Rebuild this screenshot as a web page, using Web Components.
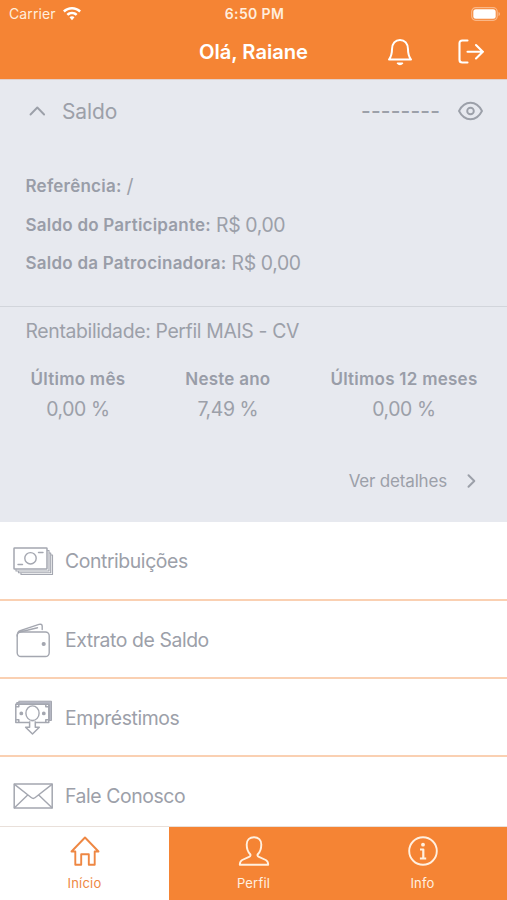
<!DOCTYPE html>
<html lang="pt-BR">
<head>
<meta charset="utf-8">
<title>Início</title>
<style>
html,body{margin:0;height:900px;overflow:hidden;background:#fff}
body{font-family:Inter,"Liberation Sans",sans-serif;color:#9ca0a9}
</style>
</head>
<body>
<mobile-app></mobile-app>
<script>
const define = (name, css, html) => customElements.define(name, class extends HTMLElement {
  constructor() {
    super();
    const t = document.createElement('template');
    t.innerHTML = `<style>*{box-sizing:border-box}:host{box-sizing:border-box}svg{display:block;flex:none;fill:none;stroke:currentColor;overflow:visible}${css}</style>${typeof html === 'function' ? html(this) : html}`;
    this.attachShadow({mode: 'open'}).append(t.content.cloneNode(true));
  }
});

define('status-bar', `
:host{display:grid;grid-template-columns:1fr auto 1fr;align-items:center;height:27px;padding:0 7px 0 9px;color:#ffeedd;font-size:14px}
.l{display:flex;align-items:center;gap:7px}.c{letter-spacing:.1px}
.t{font-weight:600;font-size:14px;letter-spacing:.35px}
.r{justify-self:end}`,
`<div class="l"><span class="c">Carrier</span>
<svg width="18" height="14" viewBox="0 0 18 14" style="fill:#fff;stroke:none"><path d="M9 0C5.600 0 2.500 1.300 0 3.600l1.700 1.900C3.700 3.700 6.200 2.600 9 2.600s5.300 1.100 7.300 2.900L18 3.600C15.500 1.300 12.400 0 9 0zM9 4.700c-2.100 0-4 .8-5.500 2.200l1.700 1.900C6.200 7.800 7.500 7.200 9 7.200s2.800.6 3.800 1.600l1.700-1.900C13 5.500 11.100 4.700 9 4.700zM9 9.200c-1 0-1.800.4-2.500 1L9 13.300l2.500-3.100c-.7-.6-1.500-1-2.500-1z"/></svg></div>
<span class="t">6:50 PM</span>
<svg class="r" width="29" height="14" viewBox="0 0 29 14"><rect x=".7" y=".7" width="25.500" height="12.600" rx="4" stroke="#fab787" stroke-width="1.200"/><rect x="2.300" y="2.200" width="22.400" height="9.600" rx="2.500" fill="#fff" stroke="none"/><path d="M27.500 5v4c.9-.3 1.500-1 1.500-2s-.6-1.700-1.500-2z" fill="#fab787" stroke="none"/></svg>`);

define('app-header', `
:host{display:block;height:79px;background:#f58434;color:#fff}
.bar{display:grid;grid-template-columns:1fr auto 1fr;align-items:center;height:49px}
h1{grid-column:2;margin:0;font-size:20.200px;font-weight:600;letter-spacing:-.05px;white-space:nowrap}
.a{display:flex;justify-content:flex-end;align-items:center;gap:45px;padding:1px 23px 0 0}`,
`<status-bar></status-bar>
<div class="bar"><h1><slot></slot></h1><div class="a">
<svg width="26" height="28" viewBox="0 0 26 28" stroke-width="2" stroke-linejoin="round" stroke-linecap="round"><path d="M2 21.500c2.300-3 3-5.400 3-10.200C5 5.500 8.400 1.900 13 1.900s8 3.600 8 9.400c0 4.800.7 7.200 3 10.200z"/><path d="M10.500 25.200c1.400 1.600 3.600 1.600 5 0z" fill="currentColor" stroke-width="1.500"/></svg>
<svg width="26" height="26" viewBox="0 0 26 26" stroke-width="2.100" stroke-linecap="round" stroke-linejoin="round"><path d="M9.500 1.500H4.300Q1.500 1.500 1.500 4.300v16.400q0 2.800 2.800 2.800h5.200M9.500 12.700H25M18 6l6.800 6.700L18 19.400"/></svg>
</div></div>`);

define('balance-line', `
:host{display:flex;align-items:center;gap:5px;height:38.400px;font-size:19.400px;white-space:nowrap;letter-spacing:-.35px}
b{font-size:17px;font-weight:600;color:#999da8;letter-spacing:.23px}`,
el => `<b>${el.getAttribute('label')}</b><span><slot></slot></span>`);

define('return-rate', `
:host{display:block;text-align:center;white-space:nowrap}
b{display:block;font-size:17px;line-height:24px;font-weight:600;color:#999da8;letter-spacing:.25px}
span{display:block;font-size:19.400px;line-height:24px;margin-top:6px;letter-spacing:-.4px}`,
el => `<b>${el.getAttribute('label')}</b><span><slot></slot></span>`);

define('balance-panel', `
:host{display:block;height:443.400px;background:#e7e9ef;border-top:1px solid #e3cfc9}
.h{display:flex;align-items:center;height:62px;padding:0 24px 0 29px}
.s{font-size:21px;margin-left:17px;letter-spacing:-.1px}
.d{margin-left:auto;margin-right:18px;margin-top:-2px;font-size:21px;font-weight:500;letter-spacing:.15px;white-space:nowrap}
.lines{height:165px;padding:25px 25.500px 0;border-bottom:1px solid #d2d5db}
.p{padding:12px 25.500px 0;font-size:19.400px;line-height:24px;letter-spacing:-.35px}
.rates{display:flex;justify-content:space-between;padding:24px 29.500px 0 30.500px}
.v{display:flex;justify-content:flex-end;align-items:center;gap:20px;height:24px;margin-top:48px;padding-right:31px;font-size:17px;letter-spacing:-.18px}`,
`<div class="h"><svg width="16" height="10" viewBox="0 0 16 10" stroke-width="1.900" stroke-linecap="round" stroke-linejoin="round"><path d="M1.500 8.500 8.300 1.500l6.800 7"/></svg><span class="s">Saldo</span><span class="d">--------</span>
<svg width="25" height="18" viewBox="0 0 25 18" stroke-width="1.900" stroke-linejoin="round"><path d="M1 9C3.500 4.100 7.400 .8 12.500 .8S21.500 4.100 24 9c-2.500 4.900-6.400 8.200-11.500 8.200S3.500 13.900 1 9z"/><circle cx="12.500" cy="9" r="3.300"/></svg></div>
<div class="lines"><balance-line label="Referência:">/</balance-line><balance-line label="Saldo do Participante:">R$ 0,00</balance-line><balance-line label="Saldo da Patrocinadora:">R$ 0,00</balance-line></div>
<div class="p">Rentabilidade: Perfil MAIS - CV</div>
<div class="rates"><return-rate label="Último mês">0,00 %</return-rate><return-rate label="Neste ano">7,49 %</return-rate><return-rate label="Últimos 12 meses">0,00 %</return-rate></div>
<div class="v"><span>Ver detalhes</span><svg width="9" height="14" viewBox="0 0 9 14" stroke-width="2" stroke-linecap="round" stroke-linejoin="round"><path d="M1.500 1.200 7.300 7l-5.800 5.800"/></svg></div>`);

const menuIcons = {
  cash: '<rect x="1" y="1" width="33" height="21" rx=".6" stroke-width="1.500"/><circle cx="17.500" cy="11.300" r="5.700"/><path d="M25.500 5.500h4.500M5 17.500h4.500"/><path d="M34.500 3.500H36v20.500H3v-1.500M36.500 6h1.200v19.700H5.500V24M38.300 8h1.200v19.500H8V26" stroke-width="1.150"/>',
  wallet: '<rect x="4.200" y="10" width="32" height="24.500" rx="3.800"/><path d="M4.200 14c-.1-2.800.6-4.600 3-5.400L26 2.400q3-.8 3.200 1.700V7.500M7 10 24.500 5.700"/><circle cx="30.700" cy="22" r="1.400" fill="currentColor"/>',
  loan: '<path d="M6 1.200H38.500V20.500H36V4.500H3.700V2.500H6z" fill="#b5b7c3" stroke-width="1"/><rect x="2.800" y="4.200" width="33" height="18.200" stroke-width="1.500" fill="#fff"/><path d="M5.800 4.700v2H3.500M32.800 4.700v2H35.300M5.800 22v-2.200H3.500M32.800 22v-2.200h2.500" stroke-width="1.500"/><ellipse cx="19.500" cy="13.200" rx="6.600" ry="7.300" fill="#fff"/><circle cx="8.300" cy="13.400" r="1.200" fill="currentColor"/><circle cx="30.800" cy="13.400" r="1.200" fill="currentColor"/><path d="M16.600 22v5.300h-4L19.500 34l6.800-6.700h-4V22" fill="#fff" stroke-width="1.500"/>',
  mail: '<rect x="1.200" y="1" width="38" height="24" stroke-width="1.500"/><path d="m1.500 1.400 17 13.400q1.700 1.300 3.400 0L39 1.400M1.500 24.700 14.700 12M39 24.700 25.700 12"/>'
};
const sizes = {cash:[40,28], wallet:[40,36], loan:[40,36], mail:[40,26]};
define('menu-item', `
:host{display:flex;align-items:center;height:78.200px;padding:2px 0 0 12.500px;gap:12.500px;font-size:19.400px;letter-spacing:-.42px;background:#fff;border-bottom:2px solid #fad0b2;white-space:nowrap}
:host(:last-of-type){border-bottom-color:transparent}
svg{color:#a4a7b0}`,
el => { const k = el.getAttribute('icon'), [w,h] = sizes[k];
  return `<svg width="${w}" height="${h}" viewBox="0 0 ${w} ${h}" stroke-width="1.400" stroke-linejoin="round" stroke-linecap="round">${menuIcons[k]}</svg><span><slot></slot></span>`; });

const tabIcons = {
  home: '<path d="M1.500 15.500 15 1.500l13.500 14h-3.800v13.300h-5.900V18.200h-7.600v10.600H5.300V15.500z"/>',
  user: '<path d="M15 1.200c-4.400 0-7.300 2.900-7.300 7.300 0 4.900 1.400 7.500 3.300 9.500 1 1.100.4 2.300-.9 2.900L3.200 24Q.8 25.300.8 28.800H29.200Q29.200 25.300 26.800 24l-6.900-3.100c-1.300-.6-1.900-1.800-.9-2.900 1.900-2 3.300-4.600 3.300-9.500 0-4.400-2.900-7.300-7.300-7.300z"/>',
  info: '<circle cx="15" cy="15" r="13.800"/><circle cx="15" cy="8.700" r="1.900" fill="currentColor" stroke="none"/><path d="M12 13.500h3.300v8.800M11.900 22.500h6.300" stroke-width="2.200" stroke-linecap="butt"/>'
};
define('tab-item', `
:host{flex:1;display:flex;flex-direction:column;align-items:center;padding-top:8.500px;color:#fff0e0;background:#f58434;font-size:13px;letter-spacing:.2px}
:host([active]){background:#fff;color:#ee8743}
span{line-height:16px;margin-top:9.500px}`,
el => `<svg width="30" height="30" viewBox="0 0 30 30" stroke-width="1.900" stroke-linejoin="round">${tabIcons[el.getAttribute('icon')]}</svg><span><slot></slot></span>`);

define('tab-bar', `:host{display:flex;height:74px;border-top:1px solid #e9e0da}`, `<slot></slot>`);

define('mobile-app', `
:host{display:flex;flex-direction:column;width:507px;height:900px;overflow:hidden}
main{flex:1;min-height:0;overflow:hidden}`,
`<app-header>Olá, Raiane</app-header>
<main><balance-panel></balance-panel>
<menu-item icon="cash">Contribuições</menu-item><menu-item icon="wallet">Extrato de Saldo</menu-item><menu-item icon="loan">Empréstimos</menu-item><menu-item icon="mail">Fale Conosco</menu-item></main>
<tab-bar><tab-item icon="home" active>Início</tab-item><tab-item icon="user">Perfil</tab-item><tab-item icon="info">Info</tab-item></tab-bar>`);
</script>
</body>
</html>
